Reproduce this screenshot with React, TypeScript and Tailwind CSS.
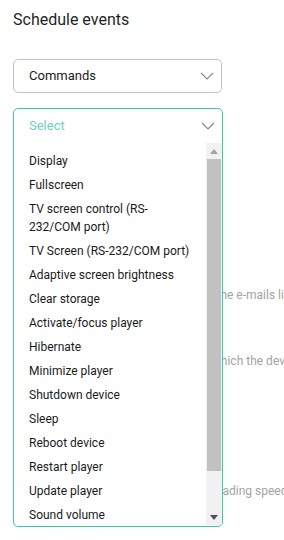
import React from "react";

const commands = [
	"Display",
	"Fullscreen",
	"TV screen control (RS-232/COM port)",
	"TV Screen (RS-232/COM port)",
	"Adaptive screen brightness",
	"Clear storage",
	"Activate/focus player",
	"Hibernate",
	"Minimize player",
	"Shutdown device",
	"Sleep",
	"Reboot device",
	"Restart player",
	"Update player",
	"Sound volume",
	"Screenshot",
];

const Chevron = () => (
	<svg width="14" height="8" viewBox="0 0 14 8" fill="none">
		<path d="M1 1l6 6 6-6" stroke="#8a8a8a" strokeWidth="1.2" />
	</svg>
);

const App = () => {
	return (
		<div
			className="relative h-[540px] w-[284px] overflow-hidden bg-white px-[13px] pt-[10px] text-[12px]"
			style={{ fontFamily: "Roboto, 'Liberation Sans', sans-serif" }}
		>
			<h1 className="text-[16px] leading-[20px] text-[#1f1f1f]">Schedule events</h1>

			<div className="mt-[29px] flex h-[34px] w-[209px] items-center justify-between rounded-[5px] border border-[#c4c4c4] pl-[15px] pr-[7px] text-[13px] text-[#1a1a1a]">
				<span>Commands</span>
				<Chevron />
			</div>

			{/* page content underneath the open menu */}
			<div className="mt-[15px] flex flex-col whitespace-nowrap text-[12px] text-[#a3a3a3]">
				<div className="h-[34px]" />
				<p className="mt-[144px] leading-[18px]">Reports will be sent weekly to each of the e-mails listed</p>
				<p className="mt-[48px] leading-[18px]">Choose the periods of the day during which the device sleeps</p>
				<p className="mt-[112px] leading-[18px]">Set up the limits for the content downloading speed</p>
			</div>

			{/* open select */}
			<div className="absolute left-[13px] top-[108px] flex h-[419px] w-[210px] flex-col overflow-hidden rounded-[5px] border border-[#3cc6b3] bg-white">
				<div className="flex h-[34px] shrink-0 items-center justify-between pl-[15px] pr-[7px]">
					<span className="text-[13px] text-[#6fcfc1]">Select</span>
					<Chevron />
				</div>
				<div className="flex min-h-0 flex-1 overflow-hidden pb-[1px]">
					<ul className="flex-1 pl-[15px] pr-[12px] pt-[6px] text-[#1a1a1a]">
						{commands.map((c) => (
							<li key={c} className="py-[3px] leading-[18px]">
								{c}
							</li>
						))}
					</ul>
					<div className="flex w-[16px] shrink-0 flex-col items-center bg-[#f1f1f1]">
						<div className="flex h-[16px] w-full items-center justify-center">
							<svg width="8" height="5" viewBox="0 0 8 5">
								<path d="M4 0l4 5H0z" fill="#a3a3a3" />
							</svg>
						</div>
						<div className="h-[312px] w-[14px] bg-[#c1c1c1]" />
						<div className="flex-1" />
						<div className="flex h-[16px] w-full items-center justify-center">
							<svg width="8" height="5" viewBox="0 0 8 5">
								<path d="M0 0h8L4 5z" fill="#505050" />
							</svg>
						</div>
					</div>
				</div>
			</div>
		</div>
	);
};

export default App;
